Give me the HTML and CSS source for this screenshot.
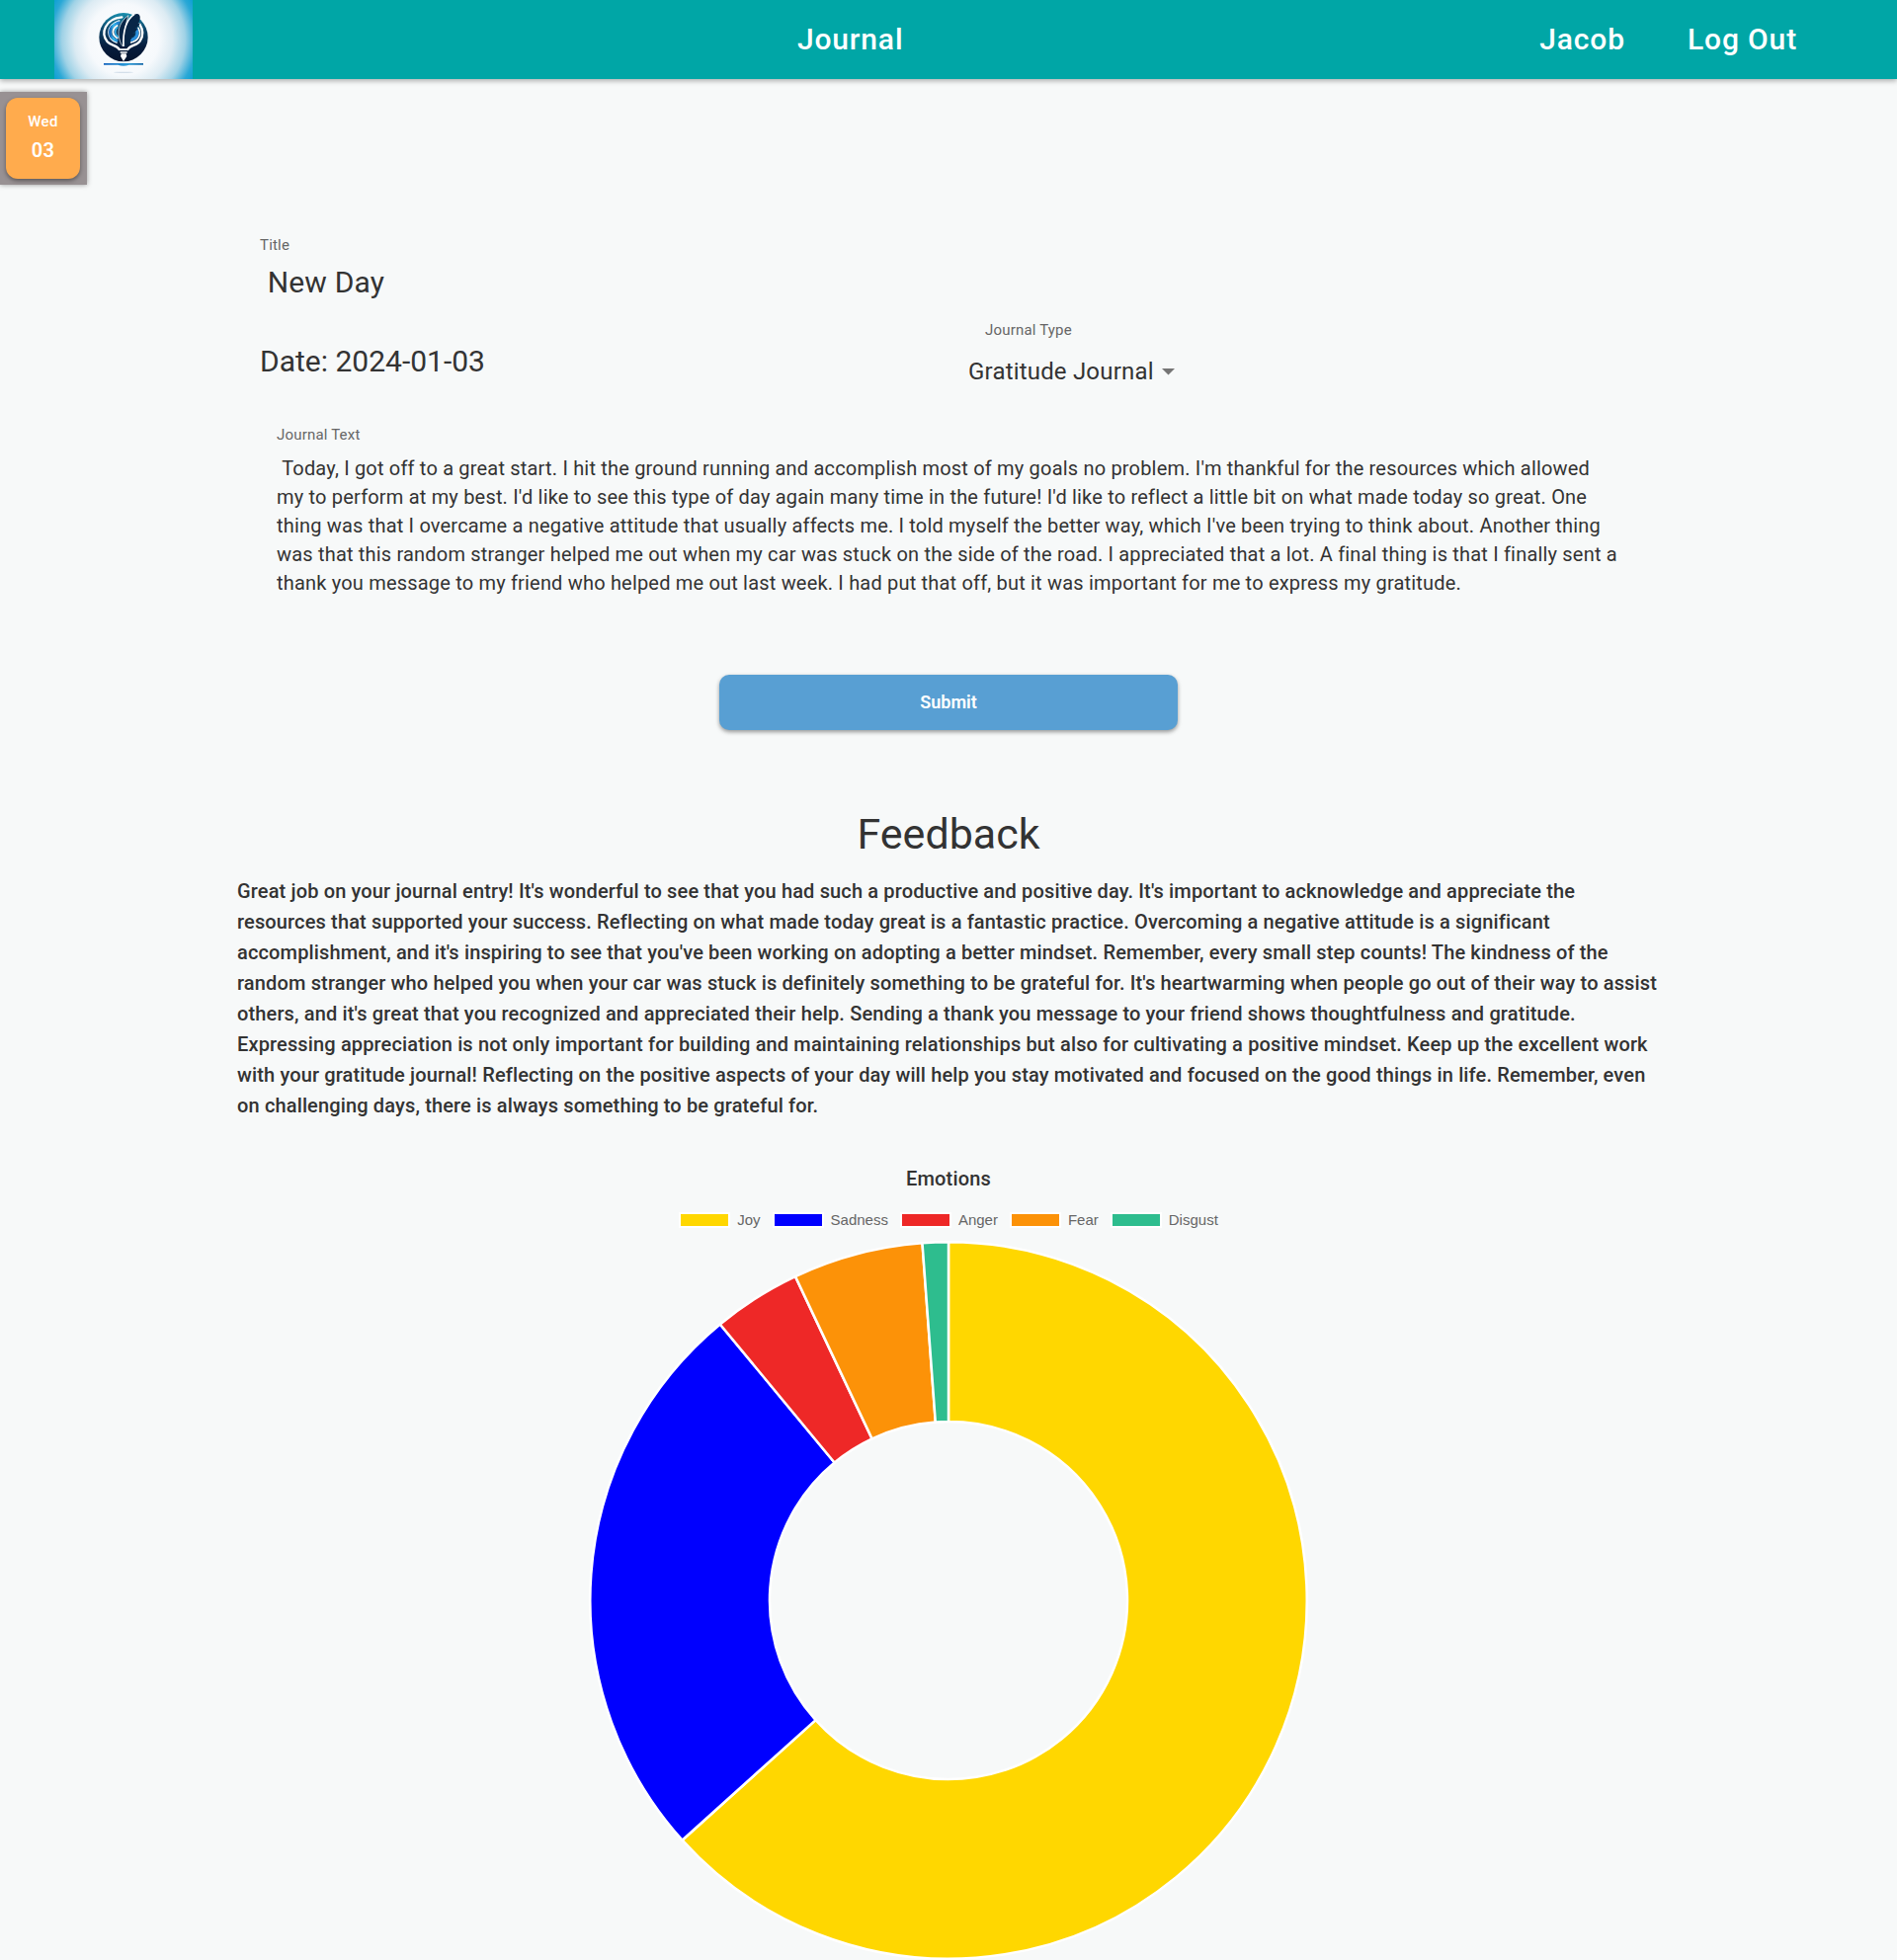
FILE: index.html
```html
<!DOCTYPE html>
<html lang="en">
<head>
<meta charset="utf-8">
<meta name="viewport" content="width=device-width, initial-scale=1">
<title>Journal</title>
<link rel="stylesheet" href="styles.css">
</head>
<body>
<header class="app-bar">
  <a class="logo" href="#" aria-label="Home">
    <svg viewBox="0 0 420 240" width="140" height="80" aria-hidden="true">
      <defs>
        <radialGradient id="glow" gradientUnits="userSpaceOnUse" cx="210" cy="120" r="240">
          <stop offset="0" stop-color="#ffffff"/>
          <stop offset=".45" stop-color="#f6f9fc"/>
          <stop offset=".62" stop-color="#dcebf3"/>
          <stop offset=".78" stop-color="#9fd2e6"/>
          <stop offset=".92" stop-color="#2aa8d6"/>
          <stop offset="1" stop-color="#0fa0d4"/>
        </radialGradient>
        <linearGradient id="disc" x1="0" y1="0" x2="0" y2="1">
          <stop offset="0" stop-color="#1a8fae"/>
          <stop offset=".35" stop-color="#0c4266"/>
          <stop offset=".7" stop-color="#061c3c"/>
          <stop offset="1" stop-color="#05152f"/>
        </linearGradient>
        <linearGradient id="swirl" x1="0" y1="0" x2="1" y2="0">
          <stop offset="0" stop-color="#1568b8"/>
          <stop offset=".4" stop-color="#35b6ea"/>
          <stop offset="1" stop-color="#1d7fd0"/>
        </linearGradient>
        <linearGradient id="base" x1="0" x2="1" y1="0" y2="0">
          <stop offset="0" stop-color="#1262bd"/>
          <stop offset=".6" stop-color="#2a9bd8"/>
          <stop offset="1" stop-color="#1567a8"/>
        </linearGradient>
      </defs>
      <rect width="420" height="240" fill="url(#glow)"/>
      <g transform="translate(105 15)">
        <circle cx="105" cy="98" r="74" fill="url(#disc)"/>
        <g fill="none" stroke-linecap="round">
          <path d="M92 135C86 122 66 124 56 112C34 84 50 42 100 37" stroke="#fff" stroke-width="7"/>
          <path d="M118 135C124 122 146 124 155 110C167 92 164 74 154 58" stroke="#fff" stroke-width="7"/>
          <path d="M84 114C54 106 48 62 92 48" stroke="#fff" stroke-width="5"/>
          <path d="M84 108C58 98 56 66 90 54" stroke="url(#swirl)" stroke-width="9"/>
          <path d="M86 100C70 92 68 74 86 63" stroke="#fff" stroke-width="6"/>
          <path d="M88 97C78 90 78 76 86 68" stroke="#35aee6" stroke-width="5"/>
          <path d="M128 114C152 108 160 88 150 70" stroke="#fff" stroke-width="5"/>
          <path d="M130 106C146 100 150 88 145 76" stroke="#2b8fdc" stroke-width="9"/>
        </g>
        <path d="M101 124C82 92 88 54 120 32C111 58 106 88 106 124Z" fill="#082647" stroke="#fff" stroke-width="2"/>
        <path d="M106 126C104 82 112 46 138 29C158 20 160 44 148 58L156 54C152 65 146 68 140 72L148 71C144 80 138 83 131 87L140 86C134 96 128 99 122 102L130 102C124 110 116 114 112 126Z" fill="#082647"/>
        <path d="M105 126C103 82 111 46 138 28" fill="none" stroke="#fff" stroke-width="5"/>
        <path d="M93 133H118V138H93ZM95 142H116V146H95Z" fill="#fff"/>
        <path d="M98 148H113L115 156L105 171L96 156Z" fill="#fff"/>
        <path d="M45 177H165V182H122Q105 188 88 182H45Z" fill="url(#base)"/>
        <ellipse cx="105" cy="205" rx="30" ry="2" fill="#d3dfea"/>
      </g>
    </svg>
  </a>
  <a class="nav-link nav-main" href="#">Journal</a>
  <nav class="account">
    <a class="nav-link" href="#">Jacob</a>
    <a class="nav-link" href="#">Log Out</a>
  </nav>
</header>

<aside class="days">
  <button class="day" type="button"><span class="day-name">Wed</span><span class="day-number">03</span></button>
</aside>

<main class="page">
  <form class="entry">
    <div class="field">
      <label class="label" for="title">Title</label>
      <input class="title-input" id="title" type="text" value=" New Day">
    </div>
    <div class="meta">
      <p class="date">Date: 2024-01-03</p>
      <div class="type">
        <label class="label type-label" for="type">Journal Type</label>
        <div class="select-wrap">
          <select class="select" id="type">
            <option>Gratitude Journal</option>
          </select>
          <svg class="arrow" viewBox="0 0 13 8" width="13" height="8" aria-hidden="true"><path d="M0 1H13L6.500 7.500Z" fill="#757575"/></svg>
        </div>
      </div>
    </div>
    <div class="field field-text">
      <label class="label" for="text">Journal Text</label>
      <textarea class="text-input" id="text" rows="5"> Today, I got off to a great start. I hit the ground running and accomplish most of my goals no problem. I'm thankful for the resources which allowed my to perform at my best. I'd like to see this type of day again many time in the future! I'd like to reflect a little bit on what made today so great. One thing was that I overcame a negative attitude that usually affects me. I told myself the better way, which I've been trying to think about. Another thing was that this random stranger helped me out when my car was stuck on the side of the road. I appreciated that a lot. A final thing is that I finally sent a thank you message to my friend who helped me out last week. I had put that off, but it was important for me to express my gratitude.</textarea>
    </div>
    <button class="submit" type="submit">Submit</button>
  </form>

  <section class="feedback">
    <h1 class="heading">Feedback</h1>
    <p class="feedback-text">Great job on your journal entry! It's wonderful to see that you had such a productive and positive day. It's important to acknowledge and appreciate the resources that supported your success. Reflecting on what made today great is a fantastic practice. Overcoming a negative attitude is a significant accomplishment, and it's inspiring to see that you've been working on adopting a better mindset. Remember, every small step counts! The kindness of the random stranger who helped you when your car was stuck is definitely something to be grateful for. It's heartwarming when people go out of their way to assist others, and it's great that you recognized and appreciated their help. Sending a thank you message to your friend shows thoughtfulness and gratitude. Expressing appreciation is not only important for building and maintaining relationships but also for cultivating a positive mindset. Keep up the excellent work with your gratitude journal! Reflecting on the positive aspects of your day will help you stay motivated and focused on the good things in life. Remember, even on challenging days, there is always something to be grateful for.</p>
  </section>

  <section class="emotions">
    <h2 class="chart-title">Emotions</h2>
    <ul class="legend">
      <li class="legend-item"><span class="swatch joy"></span>Joy</li>
      <li class="legend-item"><span class="swatch sadness"></span>Sadness</li>
      <li class="legend-item"><span class="swatch anger"></span>Anger</li>
      <li class="legend-item"><span class="swatch fear"></span>Fear</li>
      <li class="legend-item"><span class="swatch disgust"></span>Disgust</li>
    </ul>
    <svg class="donut" viewBox="-364 -364 728 728" role="img" aria-label="Share of each emotion">
      <g stroke="#fff" stroke-width="2.500" stroke-linejoin="round">
        <path fill="#ffd700" d="M0-362.700A362.700 362.700 0 1 1-269.500 242.700L-134.500 121.100A181 181 0 1 0 0-181Z"/>
        <path fill="#0000ff" d="M-269.500 242.700A362.700 362.700 0 0 1-231.200-279.500L-115.400-139.500A181 181 0 0 0-134.500 121.100Z"/>
        <path fill="#ee2827" d="M-231.200-279.500A362.700 362.700 0 0 1-155-327.900L-77.400-163.600A181 181 0 0 0-115.400-139.500Z"/>
        <path fill="#fc9208" d="M-155-327.900A362.700 362.700 0 0 1-26.500-361.700L-13.200-180.500A181 181 0 0 0-77.400-163.600Z"/>
        <path fill="#2ebd8e" d="M-26.500-361.700A362.700 362.700 0 0 1 0-362.700V-181A181 181 0 0 0-13.200-180.500Z"/>
      </g>
    </svg>
  </section>
</main>
</body>
</html>
```
FILE: styles.css
```css
* {
  box-sizing: border-box;
}

body {
  margin: 0;
  background: #f7f9f9;
  color: #333;
  font-family: Roboto, "Liberation Sans", sans-serif;
  font-size: 20px;
  letter-spacing: .00938em;
}

/* Top bar */
.app-bar {
  display: flex;
  align-items: center;
  justify-content: space-between;
  height: 80px;
  padding: 0 101px 0 55px;
  background: #00a6a6;
  box-shadow: 0 2px 5px rgba(0, 0, 0, .3);
}

.logo,
.logo svg {
  display: block;
}

.nav-link {
  color: #fff;
  font-size: 30px;
  font-weight: 500;
  line-height: 40px;
  letter-spacing: .02857em;
  text-decoration: none;
}

.nav-main {
  margin-right: 32px;
}

.account {
  display: flex;
  gap: 63px;
}

/* Day picker */
.days {
  width: fit-content;
  margin-top: 13px;
  padding: 6px 7px 6px 6px;
  background: #989193;
  box-shadow: 0 0 5px rgba(0, 0, 0, .4);
}

.day {
  display: flex;
  flex-direction: column;
  align-items: center;
  gap: 5px;
  width: 75px;
  height: 82px;
  padding: 12px 0 0;
  border: 0;
  border-radius: 12px;
  background: #ffab4d;
  box-shadow: 0 2px 4px rgba(0, 0, 0, .4);
  color: #fff;
  font-family: inherit;
  letter-spacing: .02857em;
}

.day-name {
  font-size: 15px;
  font-weight: 500;
  line-height: 24px;
}

.day-number {
  font-size: 20px;
  font-weight: 600;
  line-height: 24px;
}

/* Entry form */
.page {
  width: 75%;
  margin: 0 auto;
}

.entry {
  display: flex;
  flex-direction: column;
  padding: 49px 23px 0;
}

.field {
  display: flex;
  flex-direction: column;
}

.label {
  color: #666;
  font-size: 15px;
  line-height: 24px;
}

.title-input,
.text-input,
.select {
  margin: 0;
  padding: 0;
  border: 0;
  outline: 0;
  background: transparent;
  color: inherit;
  font-family: inherit;
  letter-spacing: inherit;
}

.title-input {
  height: 40px;
  margin-top: 5px;
  font-size: 30px;
}

.meta {
  display: grid;
  grid-template-columns: 1fr 1fr;
  margin-top: 17px;
}

.date {
  margin: 24px 0 0;
  font-size: 30px;
  line-height: 40px;
  letter-spacing: 0;
}

.type {
  padding-left: 20px;
}

.type-label {
  display: block;
  padding-left: 17px;
}

.select-wrap {
  display: flex;
  align-items: center;
  gap: 8px;
  margin-top: 10px;
}

.select {
  height: 40px;
  appearance: none;
  font-size: 24px;
}

.arrow {
  pointer-events: none;
}

.field-text {
  margin-top: 32px;
  padding: 0 17px;
}

.text-input {
  margin-top: 8px;
  font-size: 20px;
  line-height: 29px;
  overflow: hidden;
  resize: none;
}

.submit {
  align-self: center;
  width: 33.333%;
  height: 56px;
  margin-top: 78px;
  padding: 0 0 2px;
  border: 0;
  border-radius: 10px;
  background: #589fd3;
  box-shadow: 0 2px 4px rgba(0, 0, 0, .4);
  color: #fff;
  font-family: inherit;
  font-size: 18px;
  font-weight: 600;
}

/* Feedback */
.heading {
  margin: 79px 0 0;
  font-size: 43px;
  font-weight: 400;
  line-height: 52px;
  letter-spacing: 0;
  text-align: center;
}

.feedback-text {
  margin: 17px 0 0;
  font-weight: 500;
  line-height: 31px;
  letter-spacing: .00714em;
}

/* Emotions chart */
.emotions {
  display: flex;
  flex-direction: column;
  align-items: center;
  margin-top: 43px;
}

.chart-title {
  margin: 0;
  font-size: 20px;
  font-weight: 500;
  line-height: 31px;
}

.legend {
  display: flex;
  flex-wrap: wrap;
  justify-content: center;
  gap: 12px;
  margin: 16px 0 0;
  padding: 0;
  color: #666;
  font-family: "Liberation Sans", Arial, sans-serif;
  font-size: 15px;
  line-height: 20px;
  letter-spacing: 0;
  list-style: none;
}

.legend-item {
  display: flex;
  align-items: center;
  gap: 7px;
}

.swatch {
  width: 52px;
  height: 16px;
  border: 2px solid #fff;
}

.joy {
  background: #ffd700;
}

.sadness {
  background: #00f;
}

.anger {
  background: #ee2827;
}

.fear {
  background: #fc9208;
}

.disgust {
  background: #2ebd8e;
}

.donut {
  display: block;
  width: 100%;
  max-width: 728px;
  margin-top: 11px;
}
```
